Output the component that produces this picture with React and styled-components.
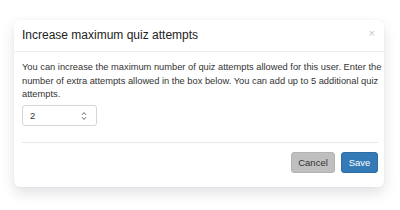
import React from "react";
import styled, { createGlobalStyle } from "styled-components";

const Global = createGlobalStyle`
  html, body { margin: 0; padding: 0; background: #fff; }
  body { font-family: "Liberation Sans", Arial, sans-serif; color: #333; }
`;

const Page = styled.div`
  width: 400px;
  height: 210px;
  padding: 20px 16px 0 14px;
  box-sizing: border-box;
`;

const Modal = styled.div`
  width: 370px;
  background: #fff;
  border-radius: 6px;
  box-shadow: 0 6px 14px rgba(0, 0, 30, 0.12), 0 0 2px rgba(0, 0, 0, 0.05);
  display: flex;
  flex-direction: column;
  padding-bottom: 14px;
`;

const Header = styled.div`
  height: 32px;
  box-sizing: border-box;
  padding: 0 9px 0 8px;
  display: flex;
  align-items: center;
  justify-content: space-between;
  border-bottom: 1px solid #eceeef;
`;

const Title = styled.h4`
  margin: 0;
  font-size: 12px;
  line-height: 14px;
  font-weight: 400;
  color: #222;
  margin-top: -2px;
`;

const Close = styled.span`
  font-size: 11px;
  color: #c8c8c8;
  line-height: 1;
  margin-top: -4px;
`;

const Body = styled.div`
  padding: 9px 6px 0 8px;
`;

const Text = styled.p`
  margin: 0;
  font-size: 9.3px;
  line-height: 13.5px;
  color: #333;
  white-space: nowrap;
`;

const Field = styled.div`
  margin-top: 3.5px;
  width: 75px;
  height: 21px;
  box-sizing: border-box;
  border: 1px solid #d6d6d6;
  border-radius: 3px;
  display: flex;
  align-items: center;
  justify-content: space-between;
  padding: 0 9px 0 7px;
  font-size: 9.5px;
  color: #333;
`;

const Footer = styled.div`
  margin: 16px 6px 0 8px;
  border-top: 1px solid #e8e8e8;
  padding-top: 9px;
  display: flex;
  justify-content: flex-end;
  gap: 6px;
`;

const Button = styled.button`
  height: 21px;
  width: ${(p) => (p.$primary ? "37px" : "44px")};
  padding: 0;
  border-radius: 3px;
  border: 1px solid ${(p) => (p.$primary ? "#2e6da4" : "#b3b3b3")};
  background: ${(p) => (p.$primary ? "#337ab7" : "#bfbfbf")};
  color: ${(p) => (p.$primary ? "#fff" : "#333")};
  font-family: "Liberation Sans", Arial, sans-serif;
  font-size: 9.5px;
  font-weight: 400;
`;

const Spinner = () => (
  <svg width="6" height="10" viewBox="0 0 6 10">
    <path d="M1 3.8 L3 1.6 L5 3.8 M1 6.2 L3 8.4 L5 6.2" fill="none" stroke="#666" strokeWidth="1" />
  </svg>
);

export default function App() {
  return (
    <>
      <Global />
      <Page>
        <Modal>
          <Header>
            <Title>Increase maximum quiz attempts</Title>
            <Close>×</Close>
          </Header>
          <Body>
            <Text>
              You can increase the maximum number of quiz attempts allowed for this user. Enter the
              <br />
              number of extra attempts allowed in the box below. You can add up to 5 additional quiz
              <br />
              attempts.
            </Text>
            <Field>
              <span>2</span>
              <Spinner />
            </Field>
          </Body>
          <Footer>
            <Button>Cancel</Button>
            <Button $primary>Save</Button>
          </Footer>
        </Modal>
      </Page>
    </>
  );
}
